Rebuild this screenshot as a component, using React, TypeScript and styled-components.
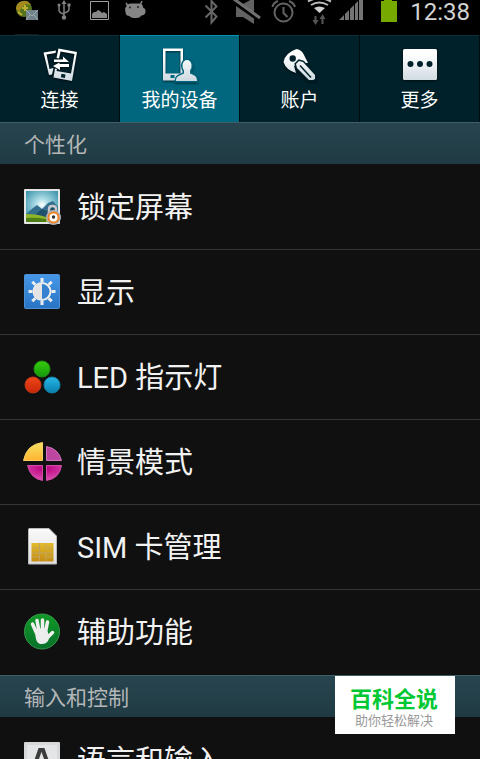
import React from "react";
import styled, { createGlobalStyle } from "styled-components";

const GlobalStyle = createGlobalStyle`
  *, *::before, *::after { box-sizing: border-box; }
  body {
    margin: 0;
    background: #101010;
    color: #f2f2f2;
    font-family: Roboto, "Noto Sans CJK SC", sans-serif;
  }
  button { font: inherit; color: inherit; }
`;

const Screen = styled.div`
  display: flex;
  flex-direction: column;
  height: 100vh;
  overflow: hidden;
`;

const StatusBar = styled.header`
  display: flex;
  flex: none;
  justify-content: space-between;
  height: 35px;
  padding: 0 10px 0 12px;
  background: #000;
`;

const StatusGroup = styled.div`
  display: flex;
  align-items: flex-start;
`;

const StatusIcon = styled.svg`
  display: block;
  flex: none;
`;

const Clock = styled.time`
  font-size: 24px;
  line-height: 24px;
  color: #d2d2d2;
`;

const Tabs = styled.nav`
  display: grid;
  flex: none;
  grid-template-columns: repeat(4, 1fr);
  height: 87px;
  background: #000d13;
`;

const Tab = styled.button<{ $active?: boolean }>`
  display: flex;
  flex-direction: column;
  align-items: center;
  gap: 4px;
  margin: 0 1px 0 0;
  padding: 11px 0 0;
  border: 0;
  border-top: 1px solid ${(p) => (p.$active ? "#0792b4" : "#0b303b")};
  background: ${(p) => (p.$active ? "#00677f" : "#00202a")};
  color: #fff;
  font-size: 19px;
  line-height: 28px;
  white-space: nowrap;
`;

const TabIcon = styled.svg`
  display: block;
  filter: drop-shadow(0 1px 1px rgba(0, 0, 0, 0.6));
`;

const Settings = styled.main`
  flex: none;
`;

const SectionTitle = styled.h2`
  margin: 0;
  height: 42px;
  padding: 0 24px;
  border-top: 1px solid #3e5d66;
  background: linear-gradient(#28454f, #1f3a43);
  color: #b4b7b8;
  font-size: 21px;
  font-weight: 400;
  line-height: 44px;
`;

const List = styled.ul`
  margin: 0;
  padding: 0 0 1px;
  list-style: none;
`;

const Item = styled.li`
  height: 85px;
  border-top: 1px solid #353535;
  &:first-child { border-top-color: #101010; }
`;

const ItemButton = styled.button`
  display: flex;
  align-items: center;
  gap: 15px;
  width: 100%;
  height: 84px;
  padding: 0 22px;
  border: 0;
  background: none;
  font-size: 29px;
  text-align: left;
`;

const ItemLabel = styled.span`
  padding-top: 2px;
  line-height: 40px;
`;

const ItemIcon = styled.svg`
  display: block;
  flex: none;
`;

const Badge = styled.aside`
  position: fixed;
  right: 25px;
  bottom: 25px;
  width: 120px;
  height: 58px;
  padding: 10px 2px 0 0;
  background: #fff;
  text-align: center;
`;

const BadgeTitle = styled.div`
  color: #00c832;
  font-size: 22px;
  font-weight: 700;
  line-height: 28px;
`;

const BadgeText = styled.div`
  color: #999;
  font-size: 13px;
  line-height: 14px;
`;

function NotificationIcons() {
  return (
    <StatusGroup>
      <StatusIcon width="36" height="35" aria-hidden="true">
        <circle cx="12" cy="9" r="8" fill="#55731a" />
        <path d="M4 9a8 8 0 0 1 15-4l-5-1-4 3-3 5z" fill="#a58a20" />
        <path d="M10 8h6M13 5v6M6 12l4 3" stroke="#c0ae35" strokeWidth="2" />
        <path d="M14 10h12v10H14z" fill="#71828b" />
        <path d="M14 10l6 6 6-6M14 20l4-5M26 20l-4-5" fill="none" stroke="#a2adb2" />
        <path d="M3 34.500h24" stroke="#191919" />
      </StatusIcon>
      <StatusIcon width="34" height="28" fill="none" stroke="#838383" strokeWidth="1.500" aria-hidden="true">
        <path d="M16 3v14M11 6v4q0 3 5 4M21 6v3q0 3-5 4" />
        <path d="M13.500 4L16 0l2.500 4z" fill="#838383" stroke="none" />
        <circle cx="11" cy="5" r="1.500" fill="#838383" stroke="none" />
        <path d="M19.500 3.500h3v3h-3z" fill="#838383" stroke="none" />
        <circle cx="16" cy="17.500" r="2.200" fill="#838383" stroke="none" />
      </StatusIcon>
      <StatusIcon width="38" height="28" aria-hidden="true">
        <path d="M8.500 1.500h18v18h-18z" fill="none" stroke="#a0a0a0" />
        <path d="M10 18v-4l2-2h2l2-2 2 1 2 2 2-1 3 2v4z" fill="#878787" />
      </StatusIcon>
      <StatusIcon width="30" height="28" aria-hidden="true">
        <path d="M6 7Q7 3.500 11 3.500h8q4 0 4 4 3 1 2.500 5-1 3-4 3-2 3-6 2.500-5 0-6-2-4 0-4-4-1-4 .5-5z" fill="#858585" />
        <path d="M8 6L6 3M20 5l2-4" stroke="#858585" strokeWidth="1.500" />
        <circle cx="10" cy="7.500" r="1" fill="#222" />
        <circle cx="18" cy="7" r="1" fill="#222" />
      </StatusIcon>
    </StatusGroup>
  );
}

function SystemIcons() {
  return (
    <StatusGroup>
      <StatusIcon width="26" height="28" aria-hidden="true">
        <path d="M5.500 5.500l11 11-5 6V1l5 5.500-11 11" fill="none" stroke="#666" strokeWidth="2" />
      </StatusIcon>
      <StatusIcon width="40" height="28" aria-hidden="true">
        <path d="M10 4h7l11-6v26l-11-7h-7z" fill="#626262" />
        <path d="M8 2l27 19" stroke="#000" strokeWidth="4" />
        <path d="M8-1l26 19" stroke="#707070" strokeWidth="3" />
      </StatusIcon>
      <StatusIcon width="36" height="28" fill="none" stroke="#636363" strokeWidth="2" aria-hidden="true">
        <circle cx="17.500" cy="12.500" r="9" />
        <path d="M17.500 7v6l4 4M6.500 7Q7 3 12 1M23 1q5 2 6 6" />
      </StatusIcon>
      <StatusIcon width="34" height="28" aria-hidden="true">
        <path d="M12 8q5-3 11 0l-5.500 5z" fill="#d0d0d0" />
        <path d="M9 5q8-5 17 0M6 1.500Q17-5 29 1.500" fill="none" stroke="#bcbcbc" strokeWidth="2" />
        <path d="M13.500 16v6M20.500 24v-6" stroke="#555" strokeWidth="2" />
        <path d="M10.500 20h6l-3 5zM17.500 19h6l-3-5z" fill="#555" />
      </StatusIcon>
      <StatusIcon width="36" height="28" aria-hidden="true">
        <path d="M3 20l5-5v5zM9 14l4-4v10H9zM14 9l4-4v15h-4zM19 4l3-3v19h-3zM23 0h4v20h-4z" fill="#747474" />
      </StatusIcon>
      <StatusIcon width="38" height="28" aria-hidden="true">
        <path d="M12-2h8v3h5v21H9V1h3z" fill="#77aa00" />
      </StatusIcon>
      <Clock>12:38</Clock>
    </StatusGroup>
  );
}

function TabGradient({ id }: { id: string }) {
  return (
    <defs>
      <linearGradient id={id} x1="0" y1="0" x2="0" y2="36" gradientUnits="userSpaceOnUse">
        <stop offset="0.200" stopColor="#fff" />
        <stop offset="1" stopColor="#cbd7df" />
      </linearGradient>
    </defs>
  );
}

function ConnectIcon() {
  return (
    <TabIcon width="36" height="36" aria-hidden="true">
      <TabGradient id="connect" />
      <path d="M1.500 5.500L14 3.500l-.5 2.500-9 1.500 3 14.500 4-1-1.500 6.500L7 28z" fill="url(#connect)" />
      <path d="M16.500 1.500L35 5l-5 29-18.500-3.500 1.500-9 2 .5-.5 2L29 26.500l3.500-19.500L18.500 4.500l-1.500 7-2.500-.5z" fill="url(#connect)" />
      <path d="M12 12.500h9V9.500l6 5.500H12zM27 17h-9.500v-1.500L11 19l7 4v-3h9z" fill="#fff" />
      <path d="M19.500 26.800l4 .8-.6 3.500-4-.8z" fill="#00202a" />
    </TabIcon>
  );
}

function DeviceIcon() {
  return (
    <TabIcon width="36" height="36" aria-hidden="true">
      <TabGradient id="device" />
      <path d="M1 1.500h20v32H1zM3.500 4v22.500h15V4z" fillRule="evenodd" fill="url(#device)" />
      <path d="M8.500 28h4v3h-4z" fill="#00677f" />
      <path d="M14 34c0-5 3-5 8-7.500v-3q-2-3-1.500-6 1-4.500 4.500-4.500t4.500 4.500q.5 3-1.500 6v3c5 2 7 3 7 7.500z" fill="url(#device)" stroke="#00677f" strokeWidth="3" paintOrder="stroke" />
    </TabIcon>
  );
}

function AccountIcon() {
  return (
    <TabIcon width="36" height="36" aria-hidden="true">
      <TabGradient id="account" />
      <path d="M14.500 2Q20 3 22 8l4 8h-7l-7 3 2 7Q4 23 1.500 15 3 6 14.500 2z" fill="url(#account)" />
      <circle cx="10.700" cy="11.500" r="3.200" fill="#00202a" />
      <path d="M14 17l3-3 4 1 12 13v4l-2 1h-4L15 21z" fill="url(#account)" stroke="#00202a" strokeWidth="3" paintOrder="stroke" />
      <path d="M18 18.500l11 12" stroke="#00202a" strokeWidth="1.500" />
    </TabIcon>
  );
}

function MoreIcon() {
  return (
    <TabIcon width="36" height="36" aria-hidden="true">
      <TabGradient id="more" />
      <rect x="1" y="2" width="34" height="31" rx="1.500" fill="url(#more)" />
      <g fill="#00202a">
        <circle cx="8.500" cy="17" r="3" />
        <circle cx="18" cy="17" r="3" />
        <circle cx="27.500" cy="17" r="3" />
      </g>
    </TabIcon>
  );
}

function LockScreenIcon() {
  return (
    <ItemIcon width="40" height="40" aria-hidden="true">
      <defs>
        <radialGradient id="sky" cx="0.500" cy="0.450" r="0.600">
          <stop offset="0" stopColor="#fff" />
          <stop offset="0.300" stopColor="#b2e0e8" />
          <stop offset="1" stopColor="#4499b0" />
        </radialGradient>
      </defs>
      <rect x="2" y="2" width="36" height="35" rx="1" fill="#e4e6e6" />
      <path d="M4 4h32v31H4z" fill="url(#sky)" />
      <path d="M4 27l7-6 4-3 5 4 6-6 5-2 5 6v10H4z" fill="#356f8d" />
      <path d="M14 27l6-5 4 2 6-5 6 5v6H14z" fill="#1e506c" />
      <path d="M4 27q12 0 20 3l12 1v4H4z" fill="#8eb62a" />
      <path d="M4 31q9-1 20 1v3H4z" fill="#4c7e15" />
      <path d="M27 26v-4q0-3 3.500-3t3.500 3v4" fill="none" stroke="#c6c8ca" strokeWidth="2.500" />
      <circle cx="31.500" cy="30.500" r="7.500" fill="#b0b2b4" />
      <circle cx="31.500" cy="30.500" r="5" fill="#fff" stroke="#ee8528" strokeWidth="2" />
      <circle cx="31.500" cy="30" r="1.700" fill="#333" />
    </ItemIcon>
  );
}

function DisplayIcon() {
  return (
    <ItemIcon width="40" height="40" aria-hidden="true">
      <defs>
        <linearGradient id="panel" x1="0" y1="0" x2="0" y2="1">
          <stop offset="0" stopColor="#4698e8" />
          <stop offset="1" stopColor="#2974c4" />
        </linearGradient>
      </defs>
      <rect x="2.500" y="2.500" width="35" height="34" rx="1" fill="url(#panel)" stroke="#4d90d4" />
      <path d="M20 6v4M20 29v4M6.500 19.500h4M29.500 19.500h4M10.300 9.800l3 3M29.700 9.800l-3 3M10.300 29.200l3-3M29.700 29.200l-3-3" stroke="#ededed" strokeWidth="3" />
      <circle cx="20" cy="19.500" r="8.500" fill="#3581d0" stroke="#ededed" strokeWidth="2" />
      <path d="M20 11a8.500 8.500 0 0 0 0 17z" fill="#e5e5e5" />
    </ItemIcon>
  );
}

function LedIcon() {
  return (
    <ItemIcon width="40" height="40" aria-hidden="true">
      <defs>
        <linearGradient id="green" x1="0" y1="0" x2="0" y2="1"><stop stopColor="#37cc0c" /><stop offset="1" stopColor="#13980c" /></linearGradient>
        <linearGradient id="red" x1="0" y1="0" x2="0" y2="1"><stop stopColor="#f04619" /><stop offset="1" stopColor="#c72708" /></linearGradient>
        <linearGradient id="blue" x1="0" y1="0" x2="0" y2="1"><stop stopColor="#27b8e7" /><stop offset="1" stopColor="#087eaf" /></linearGradient>
      </defs>
      <circle cx="20" cy="12" r="8" fill="url(#green)" stroke="#208c12" />
      <circle cx="11" cy="28" r="8" fill="url(#red)" stroke="#b93819" />
      <circle cx="30" cy="28" r="8" fill="url(#blue)" stroke="#1781a6" />
    </ItemIcon>
  );
}

function ModeIcon() {
  return (
    <ItemIcon width="40" height="40" aria-hidden="true">
      <defs>
        <linearGradient id="yellow" x1="0" y1="0" x2="0" y2="1"><stop stopColor="#f5df62" /><stop offset="1" stopColor="#ffb52f" /></linearGradient>
        <radialGradient id="magenta" cx="0.500" cy="0.200" r="0.900"><stop stopColor="#ba007e" /><stop offset="1" stopColor="#e25cb8" /></radialGradient>
      </defs>
      <path d="M20.500.5v18h-19q3-16 19-18z" fill="url(#yellow)" stroke="#f5ce68" />
      <path d="M24.500 4.500q12 2 15 14h-15z" fill="#bd46a0" stroke="#d375bd" />
      <path d="M5.500 23.500h15v15q-12-2-15-15zM24.500 23.500h15q-2 13-15 15z" fill="url(#magenta)" stroke="#cf4ba7" />
    </ItemIcon>
  );
}

function SimIcon() {
  return (
    <ItemIcon width="40" height="40" aria-hidden="true">
      <defs>
        <linearGradient id="card" x1="0" y1="0" x2="0" y2="1"><stop stopColor="#fafafa" /><stop offset="1" stopColor="#dedede" /></linearGradient>
        <linearGradient id="chip" x1="0" y1="0" x2="0" y2="1"><stop stopColor="#e3ba2b" /><stop offset="1" stopColor="#c48c15" /></linearGradient>
      </defs>
      <path d="M7 1.500h20l7.500 7.500v28H6.500V2z" fill="url(#card)" stroke="#bababa" />
      <path d="M9.500 16h22v18.500h-22z" fill="url(#chip)" />
      <path d="M17.500 16v18M24 16v6M24 26v8M10 21h7M24 21h7M10 26h21M10 30h7M24 30h7" fill="none" stroke="#c1a45c" />
    </ItemIcon>
  );
}

function AccessIcon() {
  return (
    <ItemIcon width="40" height="40" aria-hidden="true">
      <defs>
        <linearGradient id="access" x1="0" y1="0" x2="0" y2="1"><stop stopColor="#119a27" /><stop offset="1" stopColor="#08702a" /></linearGradient>
      </defs>
      <circle cx="20" cy="19.500" r="17.500" fill="url(#access)" stroke="#36974c" />
      <path d="M10.500 12l4 9M15 8.500l2 11M20.500 8v11M25.500 10l-2 10M30.500 20.500L26 25" stroke="#f0f0f0" strokeWidth="3.500" strokeLinecap="round" />
      <path d="M12.500 18q5-3 12-1l2 5 2 1L26 29q-2 3-6 3h-2q-3-1-4-5z" fill="#ededed" />
    </ItemIcon>
  );
}

function LanguageIcon() {
  return (
    <ItemIcon width="40" height="40" aria-hidden="true">
      <rect x="2" y="2" width="36" height="35" rx="1" fill="#d7d8d9" />
      <path d="M5 5h30v29H5z" fill="#e4e5e6" />
      <path d="M11 30l7-20h3l7 20M14 23h11" fill="none" stroke="#3c3c3c" strokeWidth="4" />
    </ItemIcon>
  );
}

const personal = [
  { label: "锁定屏幕", icon: <LockScreenIcon /> },
  { label: "显示", icon: <DisplayIcon /> },
  { label: "LED 指示灯", icon: <LedIcon /> },
  { label: "情景模式", icon: <ModeIcon /> },
  { label: "SIM 卡管理", icon: <SimIcon /> },
  { label: "辅助功能", icon: <AccessIcon /> },
];

const input = [{ label: "语言和输入", icon: <LanguageIcon /> }];

function SettingList({ items }: { items: { label: string; icon: React.ReactNode }[] }) {
  return (
    <List>
      {items.map((item) => (
        <Item key={item.label}>
          <ItemButton type="button">
            {item.icon}
            <ItemLabel>{item.label}</ItemLabel>
          </ItemButton>
        </Item>
      ))}
    </List>
  );
}

export default function App() {
  return (
    <Screen>
      <GlobalStyle />
      <StatusBar>
        <NotificationIcons />
        <SystemIcons />
      </StatusBar>
      <Tabs>
        <Tab type="button"><ConnectIcon />连接</Tab>
        <Tab type="button" $active aria-current="page"><DeviceIcon />我的设备</Tab>
        <Tab type="button"><AccountIcon />账户</Tab>
        <Tab type="button"><MoreIcon />更多</Tab>
      </Tabs>
      <Settings>
        <SectionTitle>个性化</SectionTitle>
        <SettingList items={personal} />
        <SectionTitle>输入和控制</SectionTitle>
        <SettingList items={input} />
      </Settings>
      <Badge>
        <BadgeTitle>百科全说</BadgeTitle>
        <BadgeText>助你轻松解决</BadgeText>
      </Badge>
    </Screen>
  );
}
